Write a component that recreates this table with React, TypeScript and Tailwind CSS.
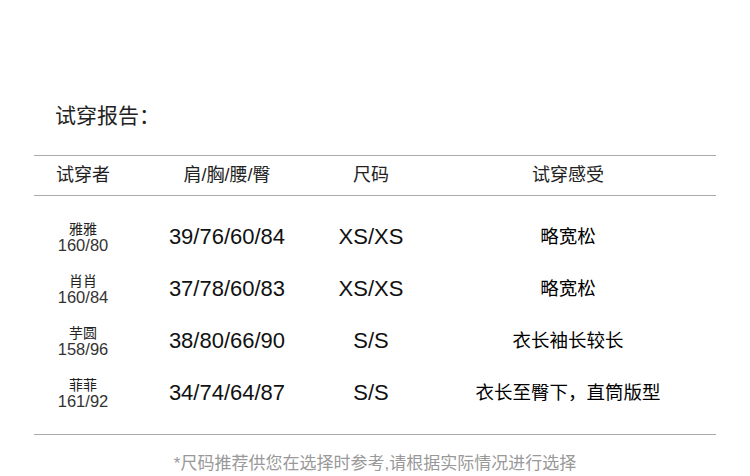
import React from "react";

const rows = [
  { name: "雅雅", hw: "160/80", m: "39/76/60/84", s: "XS/XS", f: "略宽松" },
  { name: "肖肖", hw: "160/84", m: "37/78/60/83", s: "XS/XS", f: "略宽松" },
  { name: "芋圆", hw: "158/96", m: "38/80/66/90", s: "S/S", f: "衣长袖长较长" },
  { name: "菲菲", hw: "161/92", m: "34/74/64/87", s: "S/S", f: "衣长至臀下，直筒版型" },
];

export default function App() {
  return (
    <div
      className="w-[750px] h-[476px] bg-white overflow-hidden text-[#222]"
      style={{ fontFamily: '"Liberation Sans", "Noto Sans CJK SC", sans-serif' }}
    >
      <div className="pt-[102px] pl-[55px] text-[21px] leading-[28px] text-[#222]">试穿报告：</div>
      <div className="mx-[34px] mt-[25px] w-[682px]">
        <div className="flex h-[41px] items-center border-y border-[#aaa] text-[18px] text-[#222]">
          <div className="w-[98px] text-center">试穿者</div>
          <div className="w-[190px] text-center">肩/胸/腰/臀</div>
          <div className="w-[98px] text-center">尺码</div>
          <div className="w-[296px] text-center">试穿感受</div>
        </div>
        <div className="pt-[15px] pb-[15px] border-b border-[#aaa]">
          {rows.map((r) => (
            <div key={r.name} className="flex h-[52px] items-center">
              <div className="w-[98px] flex flex-col items-center">
                <div className="text-[14px] leading-[15px] text-[#222]">{r.name}</div>
                <div className="text-[16.5px] leading-[16px] text-[#333]">{r.hw}</div>
              </div>
              <div className="w-[190px] text-center text-[22px] leading-[26px] text-[#111]">{r.m}</div>
              <div className="w-[98px] text-center text-[22px] leading-[26px] text-[#111]">{r.s}</div>
              <div className="w-[296px] text-center text-[18.5px] leading-[26px] text-[#000]">{r.f}</div>
            </div>
          ))}
        </div>
      </div>
      <div className="mt-[17px] text-center text-[17px] leading-[24px] text-[#999]">
        *尺码推荐供您在选择时参考,请根据实际情况进行选择
      </div>
    </div>
  );
}
